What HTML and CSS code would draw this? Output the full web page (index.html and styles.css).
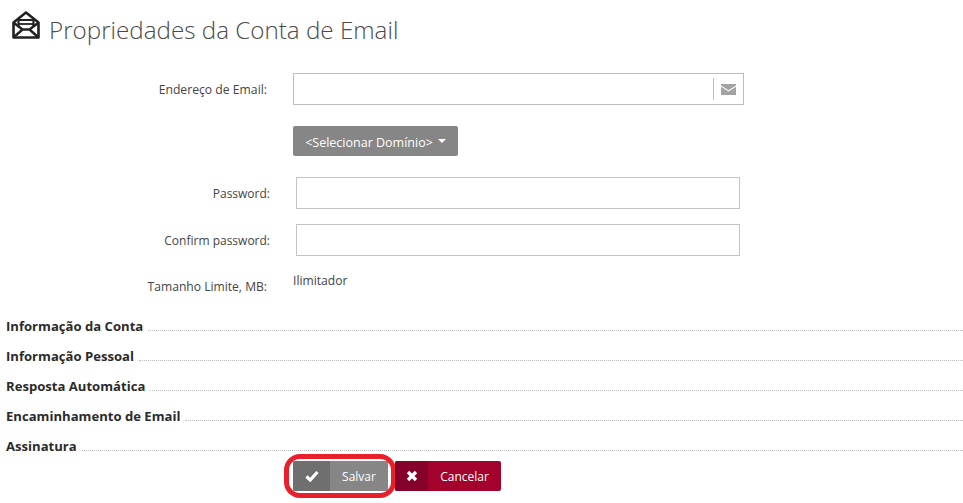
FILE: index.html
```html
<!DOCTYPE html>
<html lang="pt">
<head>
<meta charset="utf-8">
<title>Propriedades da Conta de Email</title>
<link rel="stylesheet" href="styles.css">
</head>
<body>
<header class="title">
  <svg class="title-icon" viewBox="0 0 28 28" width="28" height="28" aria-hidden="true">
    <path d="M14 1.5 L26.5 11.5 V26.5 H1.5 V11.5 Z" fill="none" stroke="#222" stroke-width="2.6" stroke-linejoin="round"/>
    <path d="M6.5 15.5 V9 H21.5 V15.5" fill="none" stroke="#222" stroke-width="2.2"/>
    <path d="M2 12 L10.5 18.5 H17.5 L26 12 M2 26 L10.5 18.5 M26 26 L17.5 18.5" fill="none" stroke="#222" stroke-width="2.4"/>
    <path d="M6.5 13 H21.5" fill="none" stroke="#222" stroke-width="1.8"/>
  </svg>
  <h1>Propriedades da Conta de Email</h1>
</header>

<form class="form">
  <div class="row row-email">
    <label class="label">Endereço de Email:</label>
    <div class="input-group">
      <input class="field-bare" type="text">
      <span class="addon">
        <svg viewBox="0 0 15 11" width="15" height="11" aria-hidden="true">
          <path d="M0 0 H15 V1.6 L7.5 6.2 L0 1.6 Z" fill="#a3a3a3"/>
          <path d="M0 2.8 L7.5 7.4 L15 2.8 V11 H0 Z" fill="#a3a3a3"/>
        </svg>
      </span>
    </div>
  </div>
  <div class="row row-domain">
    <span class="label"></span>
    <button type="button" class="domain"><span class="domain-text">&lt;Selecionar Domínio&gt;</span><span class="caret"></span></button>
  </div>
  <div class="row row-pass">
    <label class="label label-pass">Password:</label>
    <input class="field" type="password">
  </div>
  <div class="row row-confirm">
    <label class="label label-pass">Confirm password:</label>
    <input class="field" type="password">
  </div>
  <div class="row row-limit">
    <span class="label label-limit">Tamanho Limite, MB:</span>
    <span class="value">Ilimitador</span>
  </div>
</form>

<section class="sections">
  <div class="section"><span>Informação da Conta</span></div>
  <div class="section"><span>Informação Pessoal</span></div>
  <div class="section"><span>Resposta Automática</span></div>
  <div class="section"><span>Encaminhamento de Email</span></div>
  <div class="section"><span>Assinatura</span></div>
</section>

<footer class="actions">
  <button type="button" class="btn btn-save">
    <span class="btn-icon">
      <svg viewBox="0 0 14 12" width="14" height="12" aria-hidden="true"><path d="M1.5 6.5 L5.2 10 L12.5 2" fill="none" stroke="#fff" stroke-width="3.2"/></svg>
    </span>
    <span class="btn-text">Salvar</span>
    <span class="ring"></span>
  </button>
  <button type="button" class="btn btn-cancel">
    <span class="btn-icon">
      <svg viewBox="0 0 12 12" width="12" height="12" aria-hidden="true"><path d="M2 2 L10 10 M10 2 L2 10" fill="none" stroke="#fff" stroke-width="3.4"/></svg>
    </span>
    <span class="btn-text">Cancelar</span>
  </button>
</footer>
</body>
</html>
```

FILE: styles.css
```css
* { box-sizing: border-box; }
html, body { margin: 0; padding: 0; }
body {
  width: 963px;
  height: 503px;
  overflow: hidden;
  background: #fff;
  font-family: "Open Sans", "Noto Sans", sans-serif;
  font-size: 12px;
  color: #444;
}
.title {
  display: flex;
  align-items: center;
  height: 38px;
  margin-top: 11px;
  padding-left: 12px;
  gap: 9px;
}
.title-icon { flex: none; margin-top: -10px; }
.title h1 {
  margin: 0;
  font-size: 24.2px;
  font-weight: 300;
  color: #4a4a4a;
  line-height: 38px;
  white-space: nowrap;
}
.form { padding-top: 24px; }
.row { display: flex; align-items: center; }
.label {
  width: 267px;
  flex: none;
  padding-top: 2px;
  text-align: right;
  line-height: 18px;
}
.label-pass { width: 270px; }
.row-email { height: 32px; }
.row-email .label { font-size: 12.2px; }
.input-group {
  display: flex;
  align-items: center;
  width: 451px;
  height: 32px;
  margin-left: 26px;
  border: 1px solid #bdbdbd;
}
.field-bare {
  flex: 1;
  min-width: 0;
  height: 100%;
  border: 0;
  background: transparent;
  outline: 0;
}
.addon {
  display: flex;
  align-items: center;
  justify-content: center;
  width: 30px;
  height: 22px;
  border-left: 1px solid #bdbdbd;
}
.row-domain { margin-top: 21px; }
.domain {
  display: flex;
  align-items: center;
  justify-content: center;
  gap: 5px;
  width: 165px;
  height: 30px;
  margin-left: 26px;
  padding: 0;
  border: 0;
  border-radius: 2px;
  background: #868686;
  color: #fff;
  font: inherit;
  font-size: 12.5px;
}
.domain-text { padding-top: 2px; }
.caret {
  width: 0;
  height: 0;
  border-left: 4px solid transparent;
  border-right: 4px solid transparent;
  border-top: 4px solid #fff;
}
.row-pass { margin-top: 21px; }
.row-confirm { margin-top: 15px; }
.field {
  width: 444px;
  height: 32px;
  margin-left: 26px;
  border: 1px solid #c4c4c4;
  background: #fff;
  outline: 0;
}
.row-limit { align-items: flex-start; margin-top: 15px; height: 36px; }
.label-limit { padding-top: 7px; font-size: 12.1px; }
.value { margin-left: 26px; padding-top: 1px; line-height: 18px; font-size: 12.1px; }
.section {
  display: flex;
  align-items: flex-end;
  height: 30px;
  padding-left: 6px;
  color: #2b2b2b;
  font-weight: 700;
  font-size: 13.1px;
}
.section span { margin-bottom: 1px; line-height: 20px; padding-right: 5px; background: #fff; white-space: nowrap; }
.section::after {
  content: "";
  flex: 1;
  margin-bottom: 6px;
  border-bottom: 1px dotted #bcbcbc;
}
.actions {
  display: flex;
  gap: 7px;
  margin-top: 4px;
  padding-left: 293px;
}
.btn {
  position: relative;
  display: flex;
  align-items: stretch;
  height: 30px;
  padding: 0;
  border: 0;
  border-radius: 2px;
  color: #fff;
  font: inherit;
}
.btn-icon { display: flex; align-items: center; justify-content: center; }
.btn-text { display: flex; align-items: center; justify-content: center; }
.btn-save { width: 95px; background: #868686; }
.btn-save .btn-icon { width: 37px; background: #6f6f6f; border-radius: 2px 0 0 2px; }
.btn-save .btn-text { flex: 1; }
.btn-cancel { width: 106px; background: #a3022c; }
.btn-cancel .btn-icon { width: 33px; background: #86012a; border-radius: 2px 0 0 2px; }
.btn-cancel .btn-text { flex: 1; }
.ring {
  position: absolute;
  left: -9px;
  top: -7px;
  width: 112px;
  height: 44px;
  border: 5px solid #e8202c;
  border-radius: 16px;
}
```
